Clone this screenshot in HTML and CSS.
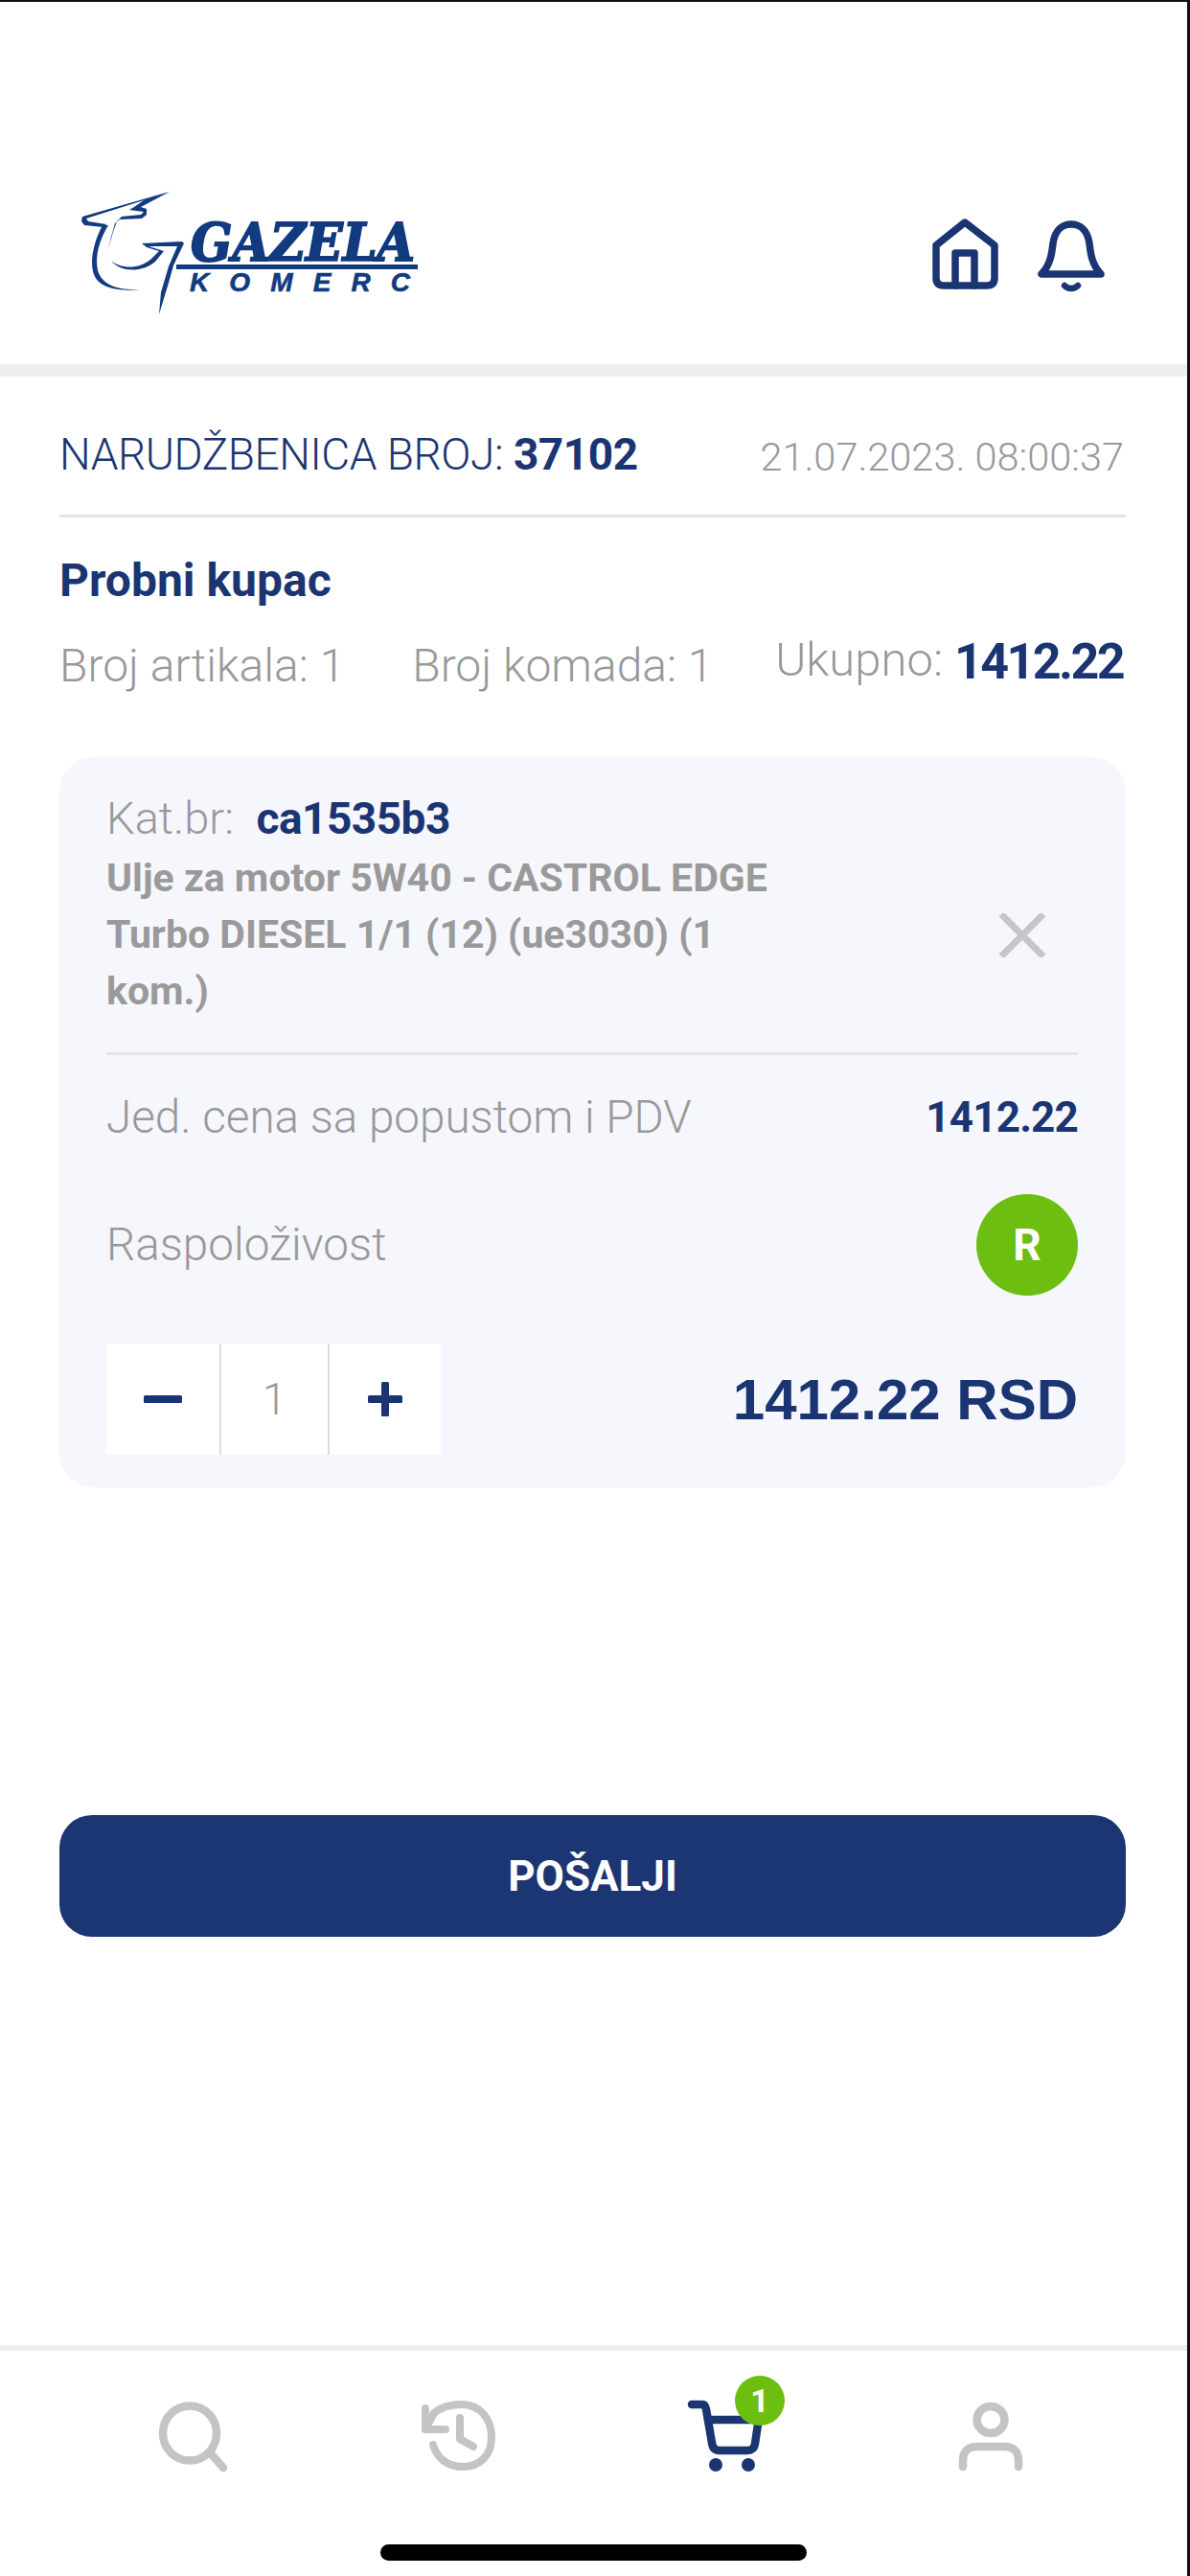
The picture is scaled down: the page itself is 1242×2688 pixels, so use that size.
FILE: index.html
```html
<!DOCTYPE html>
<html lang="sr">
<head>
<meta charset="utf-8">
<title>Gazela Komerc</title>
<link rel="stylesheet" href="styles.css">
</head>
<body>
<div class="page">
  <header class="header">
    <svg class="logo" viewBox="80 170 370 165" width="370" height="165">
      <g fill="#123a7f">
        <path d="M177 200 L86 226 L85 231 L88 235 L108 237 L111 234 L92 231 L90 228 L150 209 L140 216 L135 219 L150 221 L147 224 L127 226 L122 231 L118 242 L113 260 L116 247 L120 233 L125 229 L148 228 L153 224 L153 218 L147 216 Z"/>
        <path d="M107 235 C98 252 94 270 97 283 C100 297 115 305 146 302 C122 303 106 297 102 282 C99 268 103 252 113 235 Z"/>
        <path d="M116 272 C125 280 145 282 158 270 L166 262 L153 258 L148 254 L190 252 L192 254 L181 277 L176 295 L166 328 L168 305 L176 278 L185 257 L155 257 L171 262 L162 273 C148 285 125 284 116 272 Z"/>
        <rect x="184" y="276" width="252" height="5"/>
      </g>
      <text class="logo-name" x="199" y="272" textLength="234" lengthAdjust="spacingAndGlyphs">GAZELA</text>
      <text class="logo-sub" x="198" y="304" textLength="230" lengthAdjust="spacing">KOMERC</text>
    </svg>
    <svg class="head-icons" viewBox="965 220 195 90" width="195" height="90" fill="none" stroke="#1b3572" stroke-width="7.5" stroke-linecap="round" stroke-linejoin="round">
      <path d="M1006 232 L1037 256 V290 Q1037 298 1029 298 H984 Q976 298 976 290 V256 Z"/>
      <path d="M996 298 V264 H1016 V298"/>
      <path d="M1086 286 H1148 C1138 276 1137 262 1136 254 C1134 240 1126 234 1117 234 C1108 234 1100 240 1098 254 C1097 262 1096 276 1086 286 Z"/>
      <path d="M1110 298 C1114 302 1120 302 1124 298" stroke-width="6.5"/>
    </svg>
  </header>
  <div class="band"></div>
  <main class="content">
    <div class="order-head">
      <div class="order-no">NARUDŽBENICA BROJ: <b>37102</b></div>
      <div class="order-date">21.07.2023. 08:00:37</div>
    </div>
    <h1 class="customer">Probni kupac</h1>
    <div class="stats">
      <span class="stat">Broj artikala: 1</span>
      <span class="stat stat-second">Broj komada: 1</span>
      <span class="total">Ukupno: <b>1412.22</b></span>
    </div>
    <section class="card">
      <div class="item-row">
        <div class="item-info">
          <div class="cat">Kat.br: <b>ca1535b3</b></div>
          <div class="item-name">Ulje za motor 5W40 - CASTROL EDGE<br>Turbo DIESEL 1/1 (12) (ue3030) (1<br>kom.)</div>
        </div>
        <svg class="remove" viewBox="0 0 50 46" width="50" height="46" fill="none" stroke="#c6c6c8" stroke-width="7"><path d="M3 1 L47 45 M47 1 L3 45"/></svg>
      </div>
      <div class="rule"></div>
      <div class="line price-line">
        <span class="label">Jed. cena sa popustom i PDV</span>
        <b class="price">1412.22</b>
      </div>
      <div class="line avail-line">
        <span class="label">Raspoloživost</span>
        <span class="dot">R</span>
      </div>
      <div class="line qty-line">
        <div class="stepper">
          <span class="step step-minus"><svg viewBox="0 0 40 8" width="40" height="8"><rect width="40" height="8" rx="1.5" fill="#1b3572"/></svg></span>
          <span class="step step-value">1</span>
          <span class="step step-plus"><svg viewBox="0 0 36 36" width="36" height="36" fill="#1b3572"><rect y="14" width="36" height="8" rx="1.5"/><rect x="14" width="8" height="36" rx="1.5"/></svg></span>
        </div>
        <b class="sum">1412.22 RSD</b>
      </div>
    </section>
    <button class="send">POŠALJI</button>
  </main>
  <nav class="tabbar">
    <div class="tabs">
      <div class="tab">
        <svg viewBox="148 2495 100 100" width="100" height="100" fill="none" stroke="#c4c4c4" stroke-width="8.5" stroke-linecap="round"><ellipse cx="198" cy="2539" rx="28" ry="28.5"/><path d="M219 2559 L233 2575"/></svg>
      </div>
      <div class="tab">
        <svg viewBox="428 2495 100 100" width="100" height="100" fill="none" stroke="#c4c4c4" stroke-width="8" stroke-linecap="round" stroke-linejoin="round"><path d="M453 2518 C460 2512 470 2509 482 2509 C501 2509 513 2524 513 2543 C513 2562 501 2574 483 2574 C467 2574 456 2565 452 2551"/><path d="M444 2513 V2535 H465 M444 2535 L453 2518"/><path d="M480 2523 V2545 L494 2553"/></svg>
      </div>
      <div class="tab tab-cart">
        <svg viewBox="708 2495 100 100" width="100" height="100" fill="none" stroke="#1b3572" stroke-width="8.5" stroke-linecap="round" stroke-linejoin="round"><path d="M722 2509 H733 Q736 2509 737 2514 L743 2549 Q744 2557 751 2557 H780 Q787 2557 788 2550 L791 2530"/><path d="M739 2525 H785"/><circle cx="747" cy="2572" r="3.5" stroke-width="7"/><circle cx="781" cy="2572" r="3.5" stroke-width="7"/></svg>
        <span class="badge">1</span>
      </div>
      <div class="tab">
        <svg viewBox="988 2495 100 100" width="100" height="100" fill="none" stroke="#c4c4c4" stroke-width="8.5" stroke-linecap="round"><ellipse cx="1034" cy="2525" rx="14.5" ry="14"/><path d="M1005 2574 V2568 Q1005 2553 1020 2553 H1048 Q1063 2553 1063 2568 V2574"/></svg>
      </div>
    </div>
    <div class="home-bar"></div>
  </nav>
</div>
</body>
</html>
```
FILE: styles.css
```css
* { box-sizing: border-box; }
html, body { margin: 0; padding: 0; background: #fff; }
body { width: 1242px; height: 2688px; overflow: hidden; font-family: Roboto, "Liberation Sans", sans-serif; }
.page { width: 1242px; height: 2688px; border-top: 2px solid #111; border-right: 3px solid #111; display: flex; flex-direction: column; background: #fff; }
b { font-weight: 700; }

.header { height: 378px; flex: none; display: flex; justify-content: space-between; align-items: flex-start; padding: 168px 78px 0 80px; }
.logo-name { font-family: "DejaVu Serif", serif; font-weight: 700; font-style: italic; font-size: 55px; fill: #123a7f; stroke: #123a7f; stroke-width: 2px; }
.logo-sub { font-family: "Liberation Sans", sans-serif; font-weight: 700; font-style: italic; font-size: 28px; fill: #123a7f; stroke: #123a7f; stroke-width: 0.6px; }
.head-icons { margin-top: 50px; }
.band { height: 13px; flex: none; background: #efefef; }

.content { flex: 1; padding: 0 64px 0 62px; display: flex; flex-direction: column; }
.order-head { display: flex; justify-content: space-between; align-items: flex-start; padding: 53px 2px 35px 0; border-bottom: 3px solid #e5e5e5; }
.order-no { font-size: 46px; line-height: 56px; font-weight: 300; letter-spacing: -0.45px; color: #1b3572; white-space: nowrap; }
.order-date { padding-top: 6px; font-size: 41.5px; line-height: 50px; font-weight: 300; color: #999; white-space: nowrap; }
.customer { margin: 38px 0 0; font-size: 48px; line-height: 56px; font-weight: 700; color: #1b3572; }
.stats { margin-top: 27px; display: flex; align-items: flex-end; }
.stat { font-size: 48px; line-height: 56px; font-weight: 300; color: #999; white-space: nowrap; }
.stat-second { margin-left: 70px; }
.total { margin-left: auto; padding: 0 3px 6px 0; font-size: 49px; line-height: 56px; font-weight: 300; color: #999; white-space: nowrap; }
.total b { font-size: 52px; letter-spacing: -2.6px; color: #1b3572; vertical-align: -3px; line-height: 50px; }

.card { margin-top: 67px; padding: 36px 50px 34px 49px; border-radius: 36px; background: #f6f7fc; }
.item-row { display: flex; justify-content: space-between; align-items: center; padding-right: 33px; }
.cat { font-size: 47px; line-height: 56px; font-weight: 300; color: #999; }
.cat b { margin-left: 12px; font-size: 46px; letter-spacing: -0.5px; color: #1b3572; }
.item-name { margin-top: 5px; font-size: 41px; line-height: 59px; font-weight: 700; color: #9a9a9a; white-space: nowrap; }
.remove { margin-top: 62px; }
.rule { margin-top: 34px; height: 3px; background: #e3e4e8; }
.line { display: flex; justify-content: space-between; align-items: center; }
.label { font-size: 47.6px; line-height: 56px; font-weight: 300; color: #999; white-space: nowrap; }
.price-line { margin-top: 37px; }
.price { font-size: 44px; line-height: 56px; letter-spacing: -0.8px; color: #1b3572; }
.avail-line { margin-top: 52px; }
.dot { width: 106px; height: 106px; border-radius: 50%; background: #6cbf10; color: #fff; font-size: 46px; font-weight: 700; display: flex; align-items: center; justify-content: center; }
.qty-line { margin-top: 50px; }
.stepper { display: flex; height: 116px; background: #fff; }
.step { display: flex; align-items: center; justify-content: center; }
.step-minus { width: 120px; border-right: 2px solid #ddd; }
.step-value { width: 113px; border-right: 2px solid #ddd; font-size: 46px; font-weight: 300; color: #999; }
.step-plus { width: 116px; }
.sum { font-family: "Liberation Sans", sans-serif; font-size: 60px; font-weight: 700; color: #1b3572; white-space: nowrap; }

.send { margin-top: 342px; height: 127px; border: 0; border-radius: 34px; background: #1c3673; color: #fff; font: 700 44px Roboto, sans-serif; }

.tabbar { height: 241px; flex: none; border-top: 6px solid #efefef; }
.tabs { display: grid; grid-template-columns: repeat(4, 280px); padding: 42px 0 0 58px; }
.tab { position: relative; width: 100px; height: 100px; justify-self: center; }
.tab svg { display: block; }
.badge { position: absolute; left: 59px; top: -16px; width: 52px; height: 52px; border-radius: 50%; background: #6cbf10; color: #fff; font-size: 34px; font-weight: 700; display: flex; align-items: center; justify-content: center; }
.home-bar { margin: 60px 0 0 397px; width: 445px; height: 17px; border-radius: 9px; background: #000; }
```
